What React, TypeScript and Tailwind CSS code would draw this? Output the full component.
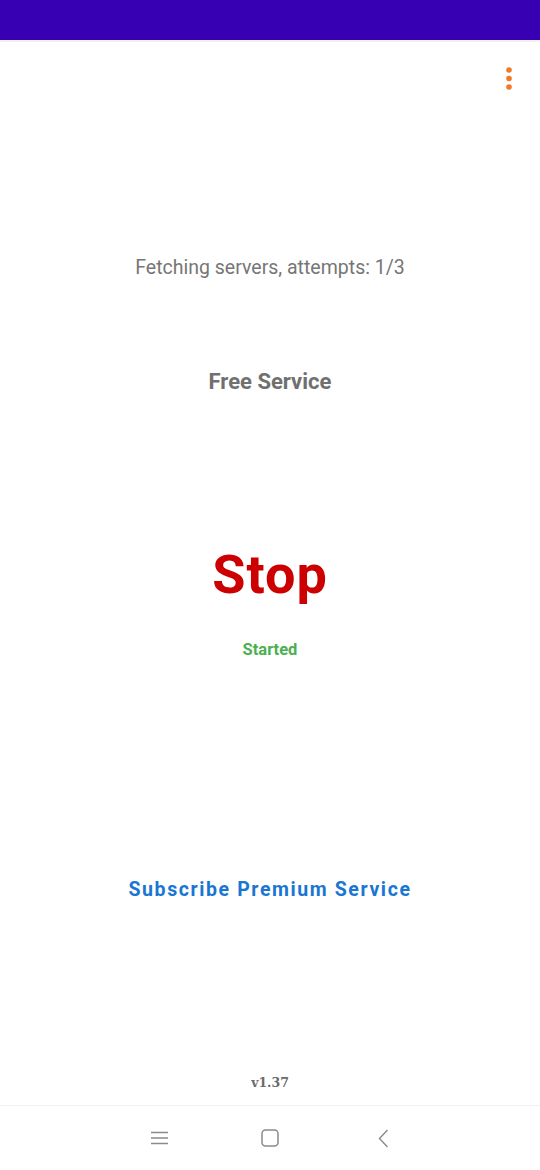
const roboto = { fontFamily: 'Roboto, "Noto Sans", sans-serif' };

function MenuDots() {
  return (
    <svg width="8" height="26" viewBox="0 0 8 26" className="block">
      <circle cx="4" cy="4" r="2.8" fill="#f07a2a" />
      <circle cx="4" cy="12.5" r="2.8" fill="#f07a2a" />
      <circle cx="4" cy="21" r="2.8" fill="#f07a2a" />
    </svg>
  );
}

function NavBar() {
  return (
    <div className="h-[65px] border-t border-[#f1f1f1] flex items-center pl-[151px]">
      <svg width="17" height="14" viewBox="0 0 17 14">
        <path d="M0 1.5h17M0 7h17M0 12.5h17" stroke="#8a8a8a" strokeWidth="1.4" />
      </svg>
      <svg width="18" height="18" viewBox="0 0 18 18" className="ml-[93px]">
        <rect x="1" y="1" width="16" height="16" rx="3.5" fill="none" stroke="#8a8a8a" strokeWidth="1.5" />
      </svg>
      <svg width="11" height="19" viewBox="0 0 11 19" className="ml-[99px]">
        <path d="M9.5 1L1.5 9.5L9.5 18" fill="none" stroke="#8a8a8a" strokeWidth="1.4" />
      </svg>
    </div>
  );
}

export default function App() {
  return (
    <div className="w-[540px] h-[1170px] bg-white flex flex-col overflow-hidden" style={roboto}>
      <div className="h-[40px] bg-[#3700b3] shrink-0" />
      <div className="h-[2px] bg-[#f3f0f8] shrink-0" />

      <div className="flex-1 flex flex-col">
        {/* toolbar */}
        <div className="h-[74px] flex justify-end items-start pt-[24px] pr-[27px]">
          <MenuDots />
        </div>

        <p className="mt-[138px] h-[28px] leading-[28px] text-center text-[19.5px] text-[#767676]">
          Fetching servers, attempts: 1/3
        </p>

        <p className="mt-[86px] h-[28px] leading-[28px] text-center text-[22px] font-bold text-[#707070]">
          Free Service
        </p>

        <p className="mt-[152px] h-[54px] leading-[54px] text-center text-[54px] font-bold text-[#cc0000] tracking-[1px]">
          Stop
        </p>

        <p className="mt-[38px] h-[20px] leading-[20px] text-center text-[16.5px] font-bold text-[#4caf50]">
          Started
        </p>

        <p className="mt-[218px] h-[24px] leading-[24px] text-center text-[19.5px] font-bold tracking-[1.6px] text-[#1976d2]">
          Subscribe Premium Service
        </p>

        <div className="flex-1" />

        <p
          className="h-[20px] leading-[20px] mb-[12px] text-center text-[12.5px] font-bold text-[#6a6a6a]"
          style={{ fontFamily: '"DejaVu Serif", "Liberation Serif", serif' }}
        >
          v1.37
        </p>
      </div>

      <NavBar />
    </div>
  );
}
